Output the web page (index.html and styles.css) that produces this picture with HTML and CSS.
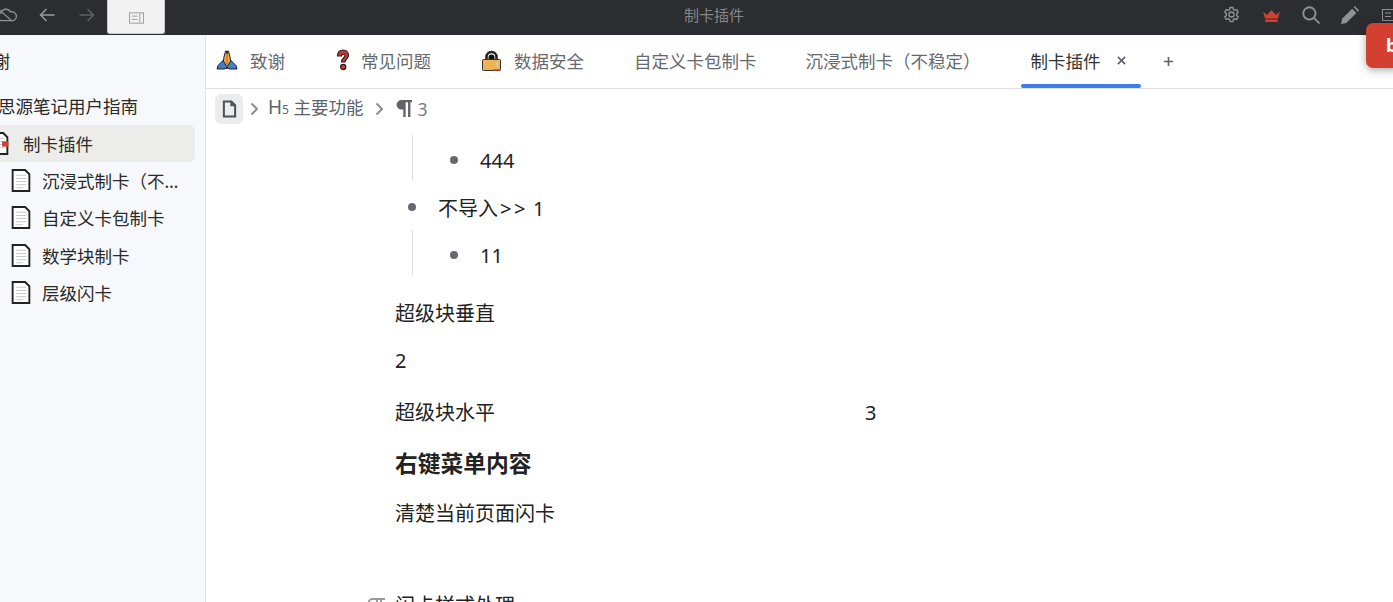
FILE: index.html
```html
<!DOCTYPE html>
<html lang="zh">
<head>
<meta charset="utf-8">
<title>制卡插件</title>
<link rel="stylesheet" href="styles.css">
</head>
<body>
<header class="toolbar">
  <div class="toolbar-left">
    <svg class="ti cloud" viewBox="0 0 24 16"><path d="M6 14.500a4.500 4.500 0 0 1-1-8.800A6 6 0 0 1 16 4.500a4.800 4.800 0 0 1 3 10z"/><path d="M3 2l15 13"/></svg>
    <svg class="ti back" viewBox="0 0 16 14"><path d="M15.500 7H1.500M7.500 1l-6 6 6 6"/></svg>
    <svg class="ti fwd" viewBox="0 0 16 14"><path d="M.5 7h14M8.500 1l6 6-6 6"/></svg>
    <div class="active-dock"><svg class="dock-icon" viewBox="0 0 16 12"><rect x=".5" y=".5" width="15" height="11"/><path d="M3 4h6M3 7.500h6M11.500 1v10"/></svg></div>
  </div>
  <div class="toolbar-title">制卡插件</div>
  <div class="toolbar-right">
    <svg class="ti gear" viewBox="0 0 24 24"><circle cx="12" cy="12" r="3.600"/><path d="M10 2h4l.7 3 1.900 1 2.800-1 2 3.500-2.100 2v3l2.100 2-2 3.500-2.800-1-1.900 1-.7 3h-4l-.7-3-1.900-1-2.800 1-2-3.500 2.100-2v-3l-2.100-2 2-3.500 2.800 1 1.900-1z"/></svg>
    <svg class="crown" viewBox="0 0 17 12"><path d="M0 1.500l4 3.500L8.500 0 13 5l4-3.500L15 8.500H2zM2.300 9.500h12.400V12H2.300z"/></svg>
    <svg class="ti search" viewBox="0 0 17 17"><circle cx="7" cy="7" r="5.800"/><path d="M11 11l5.500 5.500"/></svg>
    <svg class="pen" viewBox="0 0 17 17"><path d="M0 17l1-5L10.500 2.500l4 4L5 16zM12 1l1-1 4 4-1 1.500z"/></svg>
    <svg class="dock-right" viewBox="0 0 16 12"><rect x=".5" y=".5" width="15" height="11"/><path d="M3 4h6M3 7.500h6"/></svg>
  </div>
</header>
<div class="shell">
  <aside class="sidebar">
    <div class="tree-row tree-top"><span class="row-text">致谢</span></div>
    <div class="tree-row tree-book"><span class="row-text">思源笔记用户指南</span></div>
    <div class="tree-row tree-current">
      <svg class="doc-icon current-icon" viewBox="0 0 18 22"><path class="doc-paper" d="M1 1h12l4 4v16H1z"/><path class="doc-lines" d="M4 6h10M4 9h10M4 12h10M4 15h10"/><rect class="doc-mark" x="12" y="9" width="6" height="5"/></svg>
      <span class="row-text">制卡插件</span>
    </div>
    <div class="tree-row tree-child"><svg class="doc-icon" viewBox="0 0 18 22"><path class="doc-paper" d="M1 1h12l4 4v16H1z"/><path class="doc-lines" d="M4 6h10M4 9h10M4 12h10M4 15h10M4 18h7"/></svg><span class="row-text ellipsis">沉浸式制卡（不稳定）</span></div>
    <div class="tree-row tree-child"><svg class="doc-icon" viewBox="0 0 18 22"><path class="doc-paper" d="M1 1h12l4 4v16H1z"/><path class="doc-lines" d="M4 6h10M4 9h10M4 12h10M4 15h10M4 18h7"/></svg><span class="row-text">自定义卡包制卡</span></div>
    <div class="tree-row tree-child"><svg class="doc-icon" viewBox="0 0 18 22"><path class="doc-paper" d="M1 1h12l4 4v16H1z"/><path class="doc-lines" d="M4 6h10M4 9h10M4 12h10M4 15h10M4 18h7"/></svg><span class="row-text">数学块制卡</span></div>
    <div class="tree-row tree-child"><svg class="doc-icon" viewBox="0 0 18 22"><path class="doc-paper" d="M1 1h12l4 4v16H1z"/><path class="doc-lines" d="M4 6h10M4 9h10M4 12h10M4 15h10M4 18h7"/></svg><span class="row-text">层级闪卡</span></div>
  </aside>
  <main class="main">
    <nav class="tabs">
      <div class="tab tab-thanks">
        <svg class="tab-icon" viewBox="0 0 22 20"><path d="M11 18.500l-3-1.500-1-4 1-6 1.500-6h1l.5 3 .5-3h1l1.500 6 1 6-1 4z" fill="#f0a94a" stroke="#222"/><path d="M7 10.500l-5 5-1 3.500h8l2-2zM15 10.500l5 5 1 3.500h-8l-2-2z" fill="#3f7fd0" stroke="#222"/><path d="M11 4v13" stroke="#a86a20"/></svg>
        <span>致谢</span>
      </div>
      <div class="tab tab-faq">
        <svg class="tab-icon q-icon" viewBox="0 0 14 22"><path d="M1.500 7C1.500 3 4 1 7 1s5.500 2 5.500 5.500c0 3-3.500 3.500-3.500 6.500H5.500C5.500 9 9 8.500 9 6.500c0-2-3.500-2-3.500.5z" fill="#d33a2c" stroke="#222" stroke-width="1.200"/><circle cx="7.200" cy="18" r="2.600" fill="#d33a2c" stroke="#222" stroke-width="1.200"/></svg>
        <span>常见问题</span>
      </div>
      <div class="tab tab-security">
        <svg class="tab-icon" viewBox="0 0 19 21"><path d="M4.500 10V7a5 5 0 0 1 10 0v3" fill="none" stroke="#222" stroke-width="2.500"/><path d="M6.500 10V7.500a3 3 0 0 1 6 0V10z" fill="#111"/><rect x=".5" y="9.500" width="18" height="11" rx="1" fill="#f0b354" stroke="#333"/><path d="M14 12h2v4l-1.500 2z" fill="#c9c9c9"/><path d="M11 20h7.500" stroke="#c8402c" stroke-width="1.500"/></svg>
        <span>数据安全</span>
      </div>
      <div class="tab tab-custom"><span>自定义卡包制卡</span></div>
      <div class="tab tab-immersive"><span>沉浸式制卡（不稳定）</span></div>
      <div class="tab tab-active">
        <span>制卡插件</span>
        <svg class="close" viewBox="0 0 10 10"><path d="M1 1l8 8M9 1l-8 8"/></svg>
      </div>
      <svg class="plus" viewBox="0 0 12 12"><path d="M6 1v10M1 6h10"/></svg>
      <div class="toast">b</div>
    </nav>
    <div class="crumbs">
      <div class="crumb-doc"><svg viewBox="0 0 16 18"><path d="M2 1h8l4 4v12H2z"/><path d="M10 1v4h4"/></svg></div>
      <svg class="chev" viewBox="0 0 8 14"><path d="M1.500 1.500L7 7l-5.500 5.500"/></svg>
      <span class="crumb-text"><span class="h5">H<small>5</small></span> 主要功能</span>
      <svg class="chev chev-two" viewBox="0 0 8 14"><path d="M1.500 1.500L7 7l-5.500 5.500"/></svg>
      <svg class="pilcrow" viewBox="0 0 16 16"><path d="M6 0h10v2h-1.500v14h-2.200V2H10v14H7.800V9H6A4.500 4.500 0 0 1 6 0z"/></svg>
      <span class="crumb-text crumb-para">3</span>
    </div>
    <article class="doc">
      <div class="nested nested-first"><div class="li"><i class="dot"></i><span>444</span></div></div>
      <div class="li li-outer"><i class="dot"></i><span>不导入<span class="gt">&gt;&gt;</span> 1</span></div>
      <div class="nested nested-second"><div class="li"><i class="dot"></i><span>11</span></div></div>
      <p class="para p-vert">超级块垂直</p>
      <p class="para p-two">2</p>
      <div class="columns"><p class="para">超级块水平</p><p class="para">3</p></div>
      <h4 class="heading">右键菜单内容</h4>
      <p class="para p-clear">清楚当前页面闪卡</p>
      <div class="next-heading">
        <svg class="next-mark" viewBox="0 0 18 10"><path d="M7 9H4.500a4 4 0 0 1 0-8H17M9 1v10M13 1v10"/></svg>
        <p class="para">闪卡样式处理</p>
      </div>
    </article>
  </main>
</div>
</body>
</html>
```
FILE: styles.css
```css
* { box-sizing: border-box; }
html, body { margin: 0; height: 100%; overflow: hidden; }
body { font-family: "Noto Sans", "Noto Sans CJK SC", sans-serif; color: #222; background: #fff; display: flex; flex-direction: column; }

.toolbar { height: 35px; flex: none; background: #2b2d30; display: flex; align-items: center; justify-content: space-between; position: relative; padding-bottom: 6px; }
.toolbar-left { display: flex; align-items: center; margin-left: -4px; height: 29px; }
.ti { fill: none; stroke: #8f9194; stroke-width: 1.500; }
.cloud { width: 22px; height: 14px; }
.back { width: 16px; height: 14px; margin-left: 21px; stroke: #9a9b9e; }
.fwd { width: 16px; height: 14px; margin-left: 24px; stroke: #5f6063; }
.active-dock { width: 58px; height: 34px; align-self: flex-start; margin-left: 12px; background: #f1f1f1; border: 1px solid #c8c8c8; border-top: 0; border-radius: 0 0 3px 3px; display: flex; align-items: center; justify-content: center; padding-top: 2px; }
.dock-icon { width: 15px; height: 12px; fill: none; stroke: #9a9a9a; stroke-width: 1; }
.toolbar-title { position: absolute; left: 0; right: 0; top: 0; line-height: 30px; text-align: center; font-size: 15px; color: #85878a; pointer-events: none; padding-left: 35px; }
.toolbar-right { display: flex; align-items: center; height: 29px; margin-right: -5px; }
.gear { width: 17px; height: 17px; stroke-width: 2; }
.crown { width: 17px; height: 12px; fill: #d63f2f; margin-left: 23px; margin-top: 2px; }
.search { width: 18px; height: 18px; margin-left: 22px; stroke-width: 1.800; }
.pen { width: 18px; height: 18px; fill: #8f9194; margin-left: 21px; }
.dock-right { width: 16px; height: 12px; fill: none; stroke: #8f9194; margin-left: 23px; }

.shell { flex: 1; display: flex; min-height: 0; }
.sidebar { width: 206px; flex: none; background: #f6f8fb; border-right: 1px solid #e3e4e6; font-size: 17.500px; color: #2a2a2a; padding-top: 7px; overflow: hidden; }
.tree-row { height: 37.500px; display: flex; align-items: center; white-space: nowrap; }
.tree-top { margin-left: -25px; height: 37px; }
.tree-book { margin-left: -2px; margin-top: 8px; height: 37px; }
.tree-current { width: 195px; height: 37px; margin-top: 1px; margin-bottom: -.4px; background: #ececeb; border-radius: 0 6px 6px 0; }
.tree-current .row-text { margin-left: 14px; }
.doc-icon { width: 20px; height: 23px; flex: none; }
.current-icon { margin-left: -11px; }
.doc-paper { fill: #fff; stroke: #222; stroke-width: 1.800; }
.doc-lines { stroke: #c9c9c9; stroke-width: 1; fill: none; }
.doc-mark { fill: #d4402c; }
.tree-child { padding-left: 11px; }
.tree-child .row-text { margin-left: 11px; }
.ellipsis { width: 140px; overflow: hidden; text-overflow: ellipsis; }

.main { flex: 1; min-width: 0; display: flex; flex-direction: column; }
.tabs { height: 54px; flex: none; display: flex; align-items: stretch; border-bottom: 1px solid #dfe0e2; font-size: 17.500px; color: #666a6e; position: relative; }
.tab { display: flex; align-items: center; position: relative; white-space: nowrap; padding-bottom: 3px; }
.tab-icon { width: 22px; height: 20px; flex: none; }
.tab-thanks { margin-left: 10px; gap: 12px; }
.tab-faq { margin-left: 50px; gap: 10px; }
.q-icon { width: 16px; height: 22px; }
.tab-security { margin-left: 51px; gap: 13px; }
.tab-security .tab-icon { width: 19px; height: 21px; }
.tab-custom { margin-left: 50px; }
.tab-immersive { margin-left: 49px; }
.tab-active { margin-left: 40px; width: 120px; padding-left: 10px; color: #333; }
.tab-active::after { content: ""; position: absolute; left: 0; right: 0; bottom: 0; height: 4px; background: #3b7de9; border-radius: 2px; }
.close { width: 9px; height: 9px; margin-left: 16px; stroke: #5f6368; stroke-width: 1.800; }
.plus { width: 11px; height: 11px; align-self: center; margin-left: 22px; margin-bottom: 1px; stroke: #5f6368; stroke-width: 1.800; }
.toast { position: absolute; right: -6px; top: -12px; width: 33px; height: 45px; background: #d33f31; color: #fff; border-radius: 7px 0 0 7px; box-shadow: 0 2px 8px rgba(0,0,0,.35); font-size: 18px; font-weight: 700; padding-left: 20px; line-height: 45px; overflow: hidden; }

.crumbs { height: 39px; flex: none; display: flex; align-items: center; padding-left: 9px; color: #5f6368; font-size: 17.500px; white-space: nowrap; }
.crumb-doc { width: 28px; height: 30px; background: #ececec; border-radius: 6px; display: flex; align-items: center; justify-content: center; }
.crumb-doc svg { width: 15px; height: 18px; fill: none; stroke: #4f5357; stroke-width: 2.200; }
.chev { width: 8px; height: 14px; fill: none; stroke: #8f9194; stroke-width: 2.200; margin-left: 7px; margin-right: 10px; flex: none; }
.chev-two { margin-left: 11px; margin-right: 12px; }
.h5 { font-size: 19px; }
.h5 small { font-size: 12px; }
.crumb-text { line-height: 30px; }
.pilcrow { width: 17px; height: 17px; fill: #5f6368; flex: none; }
.crumb-para { margin-left: 6px; color: #777b80; }

.doc { flex: 1; min-height: 0; padding-left: 189px; font-size: 20px; color: #222; overflow: hidden; }
.nested { margin-left: 17px; border-left: 1px solid #dcdcdc; padding-left: 37px; height: 45px; }
.nested-first { margin-top: 7px; }
.nested-second { margin-top: -2px; }
.li { display: flex; align-items: center; height: 50px; position: relative; }
.dot { position: absolute; left: 0; top: 50%; width: 8px; height: 8px; margin-top: -4px; border-radius: 50%; background: #666970; }
.nested .li { padding-left: 30px; }
.li-outer { padding-left: 43px; height: 50px; margin-top: 2px; }
.li-outer .dot { left: 13px; }
.gt { letter-spacing: 2.500px; margin-left: 2px; }
.para { margin: 0; line-height: 30px; }
.p-vert { margin-top: 24px; }
.p-two { margin-top: 17px; }
.columns { display: grid; grid-template-columns: 470px 1fr; margin-top: 22px; }
.heading { margin: 19px 0 0; font-size: 22.750px; line-height: 34px; font-weight: 700; color: #222; }
.p-clear { margin-top: 18px; }
.next-heading { position: relative; margin-top: 62px; }
.next-mark { position: absolute; left: -27px; top: 7px; width: 18px; height: 10px; fill: none; stroke: #9a9a9a; stroke-width: 2; }
```
